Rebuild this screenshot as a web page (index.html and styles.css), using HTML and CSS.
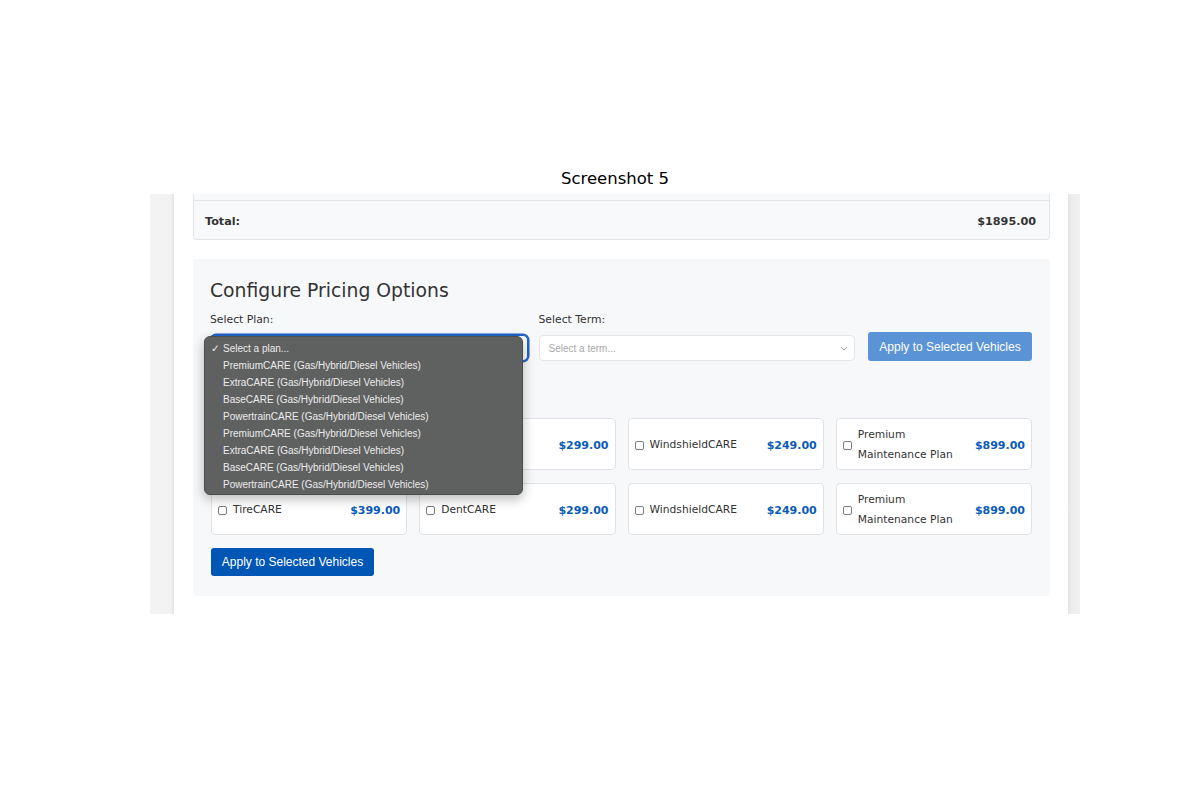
FILE: index.html
```html
<!DOCTYPE html>
<html lang="en">
<head>
<meta charset="utf-8">
<title>Screenshot 5</title>
<link rel="stylesheet" href="styles.css">
</head>
<body>
<div class="figure">
  <div class="fig-title">Screenshot 5</div>
  <div class="frame">
    <div class="side side-left"></div>
    <div class="page">
      <div class="summary">
        <div class="summary-stub"></div>
        <div class="summary-total"><span>Total:</span><span>$1895.00</span></div>
      </div>
      <section class="config">
        <h2 class="config-title">Configure Pricing Options</h2>
        <div class="select-row">
          <div class="field">
            <label class="field-label field-label-first">Select Plan:</label>
            <div class="select select-focused">
              <svg class="select-updown" width="6" height="10" viewBox="0 0 6 10"><path d="M1 4l2-2 2 2M1 6l2 2 2-2" fill="none" stroke="#333" stroke-width="1.2"/></svg>
              <ul class="menu">
                <li class="menu-item checked">Select a plan...</li>
                <li class="menu-item">PremiumCARE (Gas/Hybrid/Diesel Vehicles)</li>
                <li class="menu-item">ExtraCARE (Gas/Hybrid/Diesel Vehicles)</li>
                <li class="menu-item">BaseCARE (Gas/Hybrid/Diesel Vehicles)</li>
                <li class="menu-item">PowertrainCARE (Gas/Hybrid/Diesel Vehicles)</li>
                <li class="menu-item">PremiumCARE (Gas/Hybrid/Diesel Vehicles)</li>
                <li class="menu-item">ExtraCARE (Gas/Hybrid/Diesel Vehicles)</li>
                <li class="menu-item">BaseCARE (Gas/Hybrid/Diesel Vehicles)</li>
                <li class="menu-item">PowertrainCARE (Gas/Hybrid/Diesel Vehicles)</li>
              </ul>
            </div>
          </div>
          <div class="field">
            <label class="field-label">Select Term:</label>
            <div class="select">
              <span class="select-placeholder">Select a term...</span>
              <svg class="select-chevron" width="8" height="5" viewBox="0 0 8 5"><path d="M1 1l3 3 3-3" fill="none" stroke="#9a9a9a" stroke-width="1"/></svg>
            </div>
          </div>
          <button class="btn btn-muted">Apply to Selected Vehicles</button>
        </div>
        <div class="card-grid">
          <label class="card"><input type="checkbox" class="check"><span class="card-name">TireCARE</span><span class="card-price">$399.00</span></label>
          <label class="card"><input type="checkbox" class="check"><span class="card-name">DentCARE</span><span class="card-price">$299.00</span></label>
          <label class="card"><input type="checkbox" class="check"><span class="card-name">WindshieldCARE</span><span class="card-price">$249.00</span></label>
          <label class="card"><input type="checkbox" class="check"><span class="card-name">Premium Maintenance Plan</span><span class="card-price">$899.00</span></label>
          <label class="card"><input type="checkbox" class="check"><span class="card-name">TireCARE</span><span class="card-price">$399.00</span></label>
          <label class="card"><input type="checkbox" class="check"><span class="card-name">DentCARE</span><span class="card-price">$299.00</span></label>
          <label class="card"><input type="checkbox" class="check"><span class="card-name">WindshieldCARE</span><span class="card-price">$249.00</span></label>
          <label class="card"><input type="checkbox" class="check"><span class="card-name">Premium Maintenance Plan</span><span class="card-price">$899.00</span></label>
        </div>
        <button class="btn btn-primary">Apply to Selected Vehicles</button>
      </section>
    </div>
    <div class="side side-right"></div>
  </div>
</div>
</body>
</html>
```
FILE: styles.css
```css
* { box-sizing: border-box; }

body {
  margin: 0;
  background: #ffffff;
  font-family: "DejaVu Sans", Verdana, sans-serif;
  color: #333333;
}

.figure {
  width: 930px;
  margin-left: 150px;
  padding-top: 168px;
}

.fig-title {
  text-align: center;
  font-size: 16.5px;
  line-height: 22px;
  color: #000000;
  margin-bottom: 4px;
}

.frame {
  display: flex;
  height: 420px;
  overflow: hidden;
  background: #ffffff;
}

.side-left {
  width: 24px;
  flex: none;
  background: linear-gradient(to right, #f3f3f3 0, #f2f2f2 85%, #e4e4e4 100%);
}

.side-right {
  width: 12px;
  flex: none;
  background: linear-gradient(to right, #e3e3e3 0, #ededed 30%, #f1f1f1 100%);
}

.page {
  flex: 1;
  padding: 0 18px 0 19px;
}

/* summary table (cut off at top) */
.summary {
  border: 1px solid #e3e5e8;
  border-top: none;
  border-radius: 0 0 4px 4px;
  background: #f8f9fa;
}

.summary-stub {
  height: 7px;
  border-bottom: 1px solid #e3e5e8;
}

.summary-total {
  height: 38px;
  display: flex;
  align-items: center;
  justify-content: space-between;
  padding: 2px 13px 0 11px;
  font-weight: bold;
  font-size: 11.2px;
  color: #333333;
}

/* configuration panel */
.config {
  margin-top: 19px;
  background: #f7f8fa;
  border-radius: 4px;
  padding: 20px 18px 20px 18px;
}

.config-title {
  margin: 0 0 0 -1px;
  font-size: 18.8px;
  line-height: 24px;
  font-weight: normal;
  color: #333333;
}

.select-row {
  display: flex;
  align-items: flex-end;
  gap: 11px;
  margin-top: 8px;
  margin-bottom: 57px;
}

.field {
  flex: 1 1 0;
  display: flex;
  flex-direction: column;
  gap: 7px;
}

.field-label {
  font-size: 10.8px;
  line-height: 17px;
  color: #333333;
}

.field-label-first {
  margin-left: -1px;
}

.select {
  position: relative;
  height: 26px;
  background: #ffffff;
  border: 1px solid #e3e4e6;
  border-radius: 4px;
  display: flex;
  align-items: center;
  padding: 0 9px;
  font-family: "Liberation Sans", Arial, sans-serif;
}

.select-focused {
  border-color: #1f63cc;
  box-shadow: 0 0 0 1.5px #1f63cc;
  border-radius: 5px;
}

.select-placeholder {
  font-size: 10px;
  color: #a8a8a8;
}

.select-chevron {
  margin-left: auto;
  margin-right: -3px;
}

.select-updown {
  margin-left: auto;
  margin-right: -4px;
}

.menu {
  position: absolute;
  left: -8px;
  top: 0;
  width: 319px;
  height: 159px;
  margin: 0;
  padding: 3px 0 2px;
  list-style: none;
  background: #5f6060;
  border: 1px solid #4b4c4c;
  border-radius: 6px;
  box-shadow: 0 4px 12px rgba(0, 0, 0, 0.28);
  z-index: 10;
}

.menu-item {
  position: relative;
  height: 17px;
  line-height: 17px;
  padding-left: 18px;
  font-size: 10px;
  color: #ececec;
  white-space: nowrap;
}

.menu-item.checked::before {
  content: "\2713";
  position: absolute;
  left: 6px;
  top: 0;
  font-family: "DejaVu Sans", sans-serif;
  font-size: 10.5px;
}

.btn {
  border: none;
  border-radius: 3px;
  color: #ffffff;
  font-family: "Liberation Sans", Arial, sans-serif;
  font-size: 12px;
  padding: 0 10px;
  white-space: nowrap;
}

.btn-muted {
  height: 29px;
  width: 164px;
  margin-left: 2px;
  background: #5a93d6;
}

.btn-primary {
  display: block;
  margin-top: 13px;
  height: 28px;
  width: 163px;
  background: #0056b4;
}

.card-grid {
  display: grid;
  grid-template-columns: repeat(4, 1fr);
  column-gap: 12px;
  row-gap: 13px;
}

.card {
  height: 52px;
  display: flex;
  align-items: center;
  background: #ffffff;
  border: 1px solid #e0e2e5;
  border-radius: 4px;
  padding: 2px 6px 0 6px;
  font-size: 10.7px;
  color: #333333;
}

.check {
  appearance: none;
  -webkit-appearance: none;
  flex: none;
  width: 9px;
  height: 9px;
  margin: 0 6px 0 0;
  border: 1px solid #7d7d7d;
  border-radius: 2px;
  background: #ffffff;
}

.card-name {
  line-height: 20px;
  padding-right: 6px;
}

.card-price {
  margin-left: auto;
  font-weight: bold;
  font-size: 11px;
  color: #0b5cb8;
  white-space: nowrap;
}
```
